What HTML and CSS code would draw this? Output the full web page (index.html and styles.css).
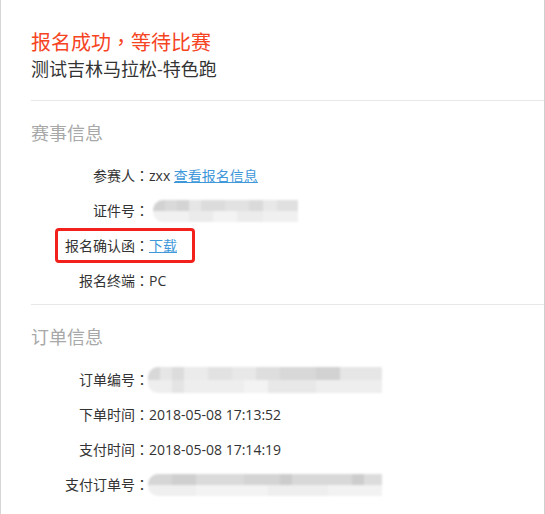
FILE: index.html
```html
<!DOCTYPE html>
<html lang="zh-CN">
<head>
<meta charset="utf-8">
<title>报名成功</title>
<link rel="stylesheet" href="styles.css">
</head>
<body>
<div class="page">
  <header class="head">
    <div class="status">报名成功<span class="punct" lang="zh-TW">，</span>等待比赛</div>
    <div class="event">测试吉林马拉松-特色跑</div>
  </header>

  <section class="block">
    <h2 class="block-title">赛事信息</h2>
    <div class="row"><span class="label">参赛人<span class="punct" lang="zh-TW">：</span></span><span class="value">zxx <a class="link" href="#">查看报名信息</a></span></div>
    <div class="row"><span class="label">证件号<span class="punct" lang="zh-TW">：</span></span><span class="mosaic mosaic-id"></span></div>
    <div class="row"><span class="label">报名确认函<span class="punct" lang="zh-TW">：</span></span><span class="value"><a class="link" href="#">下载</a></span><span class="highlight"></span></div>
    <div class="row"><span class="label">报名终端<span class="punct" lang="zh-TW">：</span></span><span class="value">PC</span></div>
  </section>

  <section class="block">
    <h2 class="block-title">订单信息</h2>
    <div class="row"><span class="label">订单编号<span class="punct" lang="zh-TW">：</span></span><span class="mosaic mosaic-order"></span></div>
    <div class="row"><span class="label">下单时间<span class="punct" lang="zh-TW">：</span></span><span class="value">2018-05-08 17:13:52</span></div>
    <div class="row"><span class="label">支付时间<span class="punct" lang="zh-TW">：</span></span><span class="value">2018-05-08 17:14:19</span></div>
    <div class="row"><span class="label">支付订单号<span class="punct" lang="zh-TW">：</span></span><span class="mosaic mosaic-pay"></span></div>
  </section>
</div>
</body>
</html>
```

FILE: styles.css
```css
* { box-sizing: border-box; }
html, body { margin: 0; padding: 0; background: #fff; }
body {
  font-family: "Open Sans", "Noto Sans CJK SC", sans-serif;
  color: #333;
}
.page {
  width: 545px;
  height: 514px;
  border-left: 1px solid #d6d6d6;
  border-right: 1px solid #cfcfcf;
  padding-left: 30px;
  padding-top: 29px;
  overflow: hidden;
}
.punct {
  font-family: "Noto Sans CJK TC", "Noto Sans CJK SC", sans-serif;
  font-feature-settings: "locl" 0;
}
.head { padding-bottom: 18px; }
.status {
  font-size: 20px;
  line-height: 26px;
  color: #f5441f;
}
.event {
  font-size: 18px;
  line-height: 26px;
  color: #333;
}
.block {
  border-top: 1px solid #e8e8e8;
  padding-top: 19px;
  padding-bottom: 6px;
}
.block-title {
  margin: 0 0 12px 0;
  font-size: 18px;
  line-height: 26px;
  font-weight: normal;
  color: #a8a8a8;
}
.row {
  position: relative;
  display: flex;
  align-items: center;
  height: 35px;
  font-size: 14px;
  line-height: 35px;
}
.label {
  width: 118px;
  text-align: right;
  color: #333;
  flex: none;
}
.value { color: #333; }
.link {
  color: #3f98d9;
  text-decoration: underline;
}
.highlight {
  position: absolute;
  left: 24px;
  top: 0;
  width: 140px;
  height: 35px;
  border: 3px solid #f3211c;
  border-radius: 4px;
}
.mosaic {
  display: block;
  filter: blur(1px);
  border-radius: 10px 0 0 10px;
}
.mosaic-id {
  width: 145px;
  height: 22px;
  margin-left: 4px;
  background:
    linear-gradient(90deg, #d2d2d2 0 12px, #d9d9d9 12px 24px, #d4d4d4 24px 36px, #e6e6e6 36px 48px, #dcdcdc 48px 72px, #e2e2e2 72px 96px, #dadada 96px 110px, #e8e8e8 110px 124px, #e0e0e0 124px 145px) top / 100% 50% no-repeat,
    linear-gradient(90deg, #f1f1f1 0 36px, #ebebeb 36px 60px, #f3f3f3 60px 84px, #ececec 84px 110px, #f0f0f0 110px 145px) bottom / 100% 50% no-repeat;
}
.mosaic-order {
  width: 234px;
  height: 26px;
  margin-left: -1px;
  background:
    linear-gradient(90deg, #d8d8d8 0 12px, #e6e6e6 12px 24px, #dcdcdc 24px 36px, #ebebeb 36px 60px, #e2e2e2 60px 84px, #e8e8e8 84px 108px, #dedede 108px 132px, #d8d8d8 132px 168px, #d2d2d2 168px 192px, #e6e6e6 192px 234px) top / 100% 50% no-repeat,
    linear-gradient(90deg, #eeeeee 0 24px, #e4e4e4 24px 36px, #eeeeee 36px 96px, #f3f3f3 96px 120px, #e8e8e8 120px 168px, #eeeeee 168px 234px) bottom / 100% 50% no-repeat;
}
.mosaic-pay {
  width: 234px;
  height: 22px;
  margin-left: -1px;
  background:
    linear-gradient(90deg, #d6d6d6 0 24px, #cfcfcf 24px 48px, #dadada 48px 96px, #d4d4d4 96px 132px, #cccccc 132px 144px, #d8d8d8 144px 204px, #cdcdcd 204px 216px, #dcdcdc 216px 234px) top / 100% 50% no-repeat,
    linear-gradient(90deg, #efefef 0 48px, #f3f3f3 48px 120px, #eeeeee 120px 180px, #f2f2f2 180px 234px) bottom / 100% 50% no-repeat;
}
```
